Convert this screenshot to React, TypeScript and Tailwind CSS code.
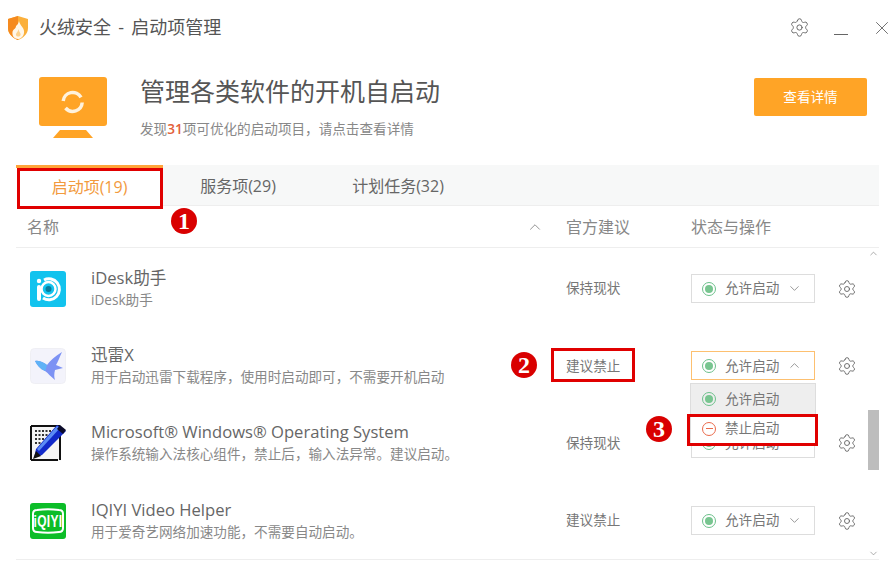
import { ChevronDown, ChevronUp, Settings, X } from "lucide-react"

const rows = [
  { name: "iDesk助手", desc: "iDesk助手", tip: "保持现状", icon: "idesk" },
  { name: "迅雷X", desc: "用于启动迅雷下载程序，使用时启动即可，不需要开机启动", tip: "建议禁止", icon: "xunlei", open: true },
  { name: "Microsoft® Windows® Operating System", desc: "操作系统输入法核心组件，禁止后，输入法异常。建议启动。", tip: "保持现状", icon: "ime" },
  { name: "IQIYI Video Helper", desc: "用于爱奇艺网络加速功能，不需要自动启动。", tip: "建议禁止", icon: "iqiyi" },
]

function ShieldLogo() {
  return (
    <svg width="22" height="26" viewBox="0 0 22 26">
      <path d="M1 4 L11 1 L21 4 V13 C21 19 16 23 11 25 C6 23 1 19 1 13 Z" fill="#fbb03b" />
      <path d="M1 4 L11 1 L11 25 C6 23 1 19 1 13 Z" fill="#f58a1f" />
      <path d="M12 6 C13 11 18 13 17 18 C16.400 22 13 24 11 24 C7 24 5 21 5.500 17 C6 14 9 14 9 11 C10.500 10 11.500 8 12 6 Z" fill="#fff7ea" />
      <path d="M11.500 14 C12 17 14 18 13.500 20 C13 22 9.500 22 9 20 C8.700 18 11 17 11.500 14 Z" fill="#fcd28f" />
    </svg>
  )
}

function MonitorIcon() {
  return (
    <svg width="70" height="62" viewBox="0 0 70 62">
      <rect x="1" y="0" width="68" height="49" rx="3" fill="#ffa426" />
      <path d="M15 61 L22 53 H48 L55 61 Z" fill="#ffa426" />
      <path d="M25.200 24 A9.500 9.500 0 0 1 43 20.400" fill="none" stroke="#fff2dc" strokeWidth="3.500" />
      <path d="M44.200 25.500 A9.500 9.500 0 0 1 27.500 31" fill="none" stroke="#fff2dc" strokeWidth="3.500" />
    </svg>
  )
}

function AppIcon({ kind }: { kind: string }) {
  if (kind === "idesk") {
    return (
      <svg width="36" height="36" viewBox="0 0 36 36">
        <rect width="36" height="36" rx="3" fill="#12c3ee" />
        <path d="M14 9 A10.500 10.500 0 1 1 13 27" fill="none" stroke="#fff" strokeWidth="3" />
        <rect x="7" y="14" width="4" height="16" rx="2" fill="#fff" />
        <circle cx="9" cy="10" r="2.200" fill="#fff" />
        <circle cx="18.500" cy="18" r="7" fill="none" stroke="#fff" strokeWidth="2.500" />
        <circle cx="18.500" cy="18" r="3" fill="#0b7c9c" />
      </svg>
    )
  }
  if (kind === "xunlei") {
    return (
      <svg width="36" height="36" viewBox="0 0 36 36">
        <rect x="0.500" y="0.500" width="35" height="35" rx="4" fill="#f3f3fb" stroke="#efeff4" />
        <path d="M5 13 C10 12 14 15 17 17 C20 13 25 8 32 4 C29 10 28 14 26 17 L33 20 L25 22 C24 26 24 29 25 32 C21 29 18 25 15 23 C10 21 7 17 5 13 Z" fill="#7c92f4" />
        <path d="M5 13 C10 12 14 15 17 17 C16 20 16 22 15 23 C10 21 7 17 5 13 Z" fill="#5fb2f6" />
      </svg>
    )
  }
  if (kind === "ime") {
    return (
      <svg width="36" height="36" viewBox="0 0 36 36">
        <path d="M0.500 0.500 H31 V35.500 H0.500 Z" fill="#f4f4f4" />
        <path d="M1 1 H30 M1 1 V35 M1 35 H28" fill="none" stroke="#111" strokeWidth="2" />
        <path d="M5 6 H24 M5 10 H20 M5 14 H16 M5 18 H12" fill="none" stroke="#333" strokeWidth="2" strokeDasharray="2 1.500" />
        <path d="M30 11 V35" fill="none" stroke="#111" strokeWidth="2" />
        <path d="M27 0 L36 6 L12 30 L4 33 L6 24 Z" fill="#1129c9" />
        <path d="M27 1 L30 3 L9 26 L7 24 Z" fill="#5b8cf5" />
        <path d="M30 0 L36 5 L33 9 L27 4 Z" fill="#0b0b2a" />
        <path d="M6 26 L3 34 L11 31 Z" fill="#111" />
      </svg>
    )
  }
  return (
    <svg width="36" height="36" viewBox="0 0 36 36">
      <rect width="36" height="36" rx="3" fill="#0cbd28" />
      <path d="M3 11 C3 8 5 7 7 7 C14 6 22 6 29 7 C31 7 33 8 33 11 V25 C33 28 31 29 29 29 C22 30 14 30 7 29 C5 29 3 28 3 25 Z" fill="none" stroke="#fff" strokeWidth="2" />
      <text transform="translate(18 23.500) scale(1 1.400)" textAnchor="middle" fontSize="12" fontWeight="700" fill="#fff" fontFamily="Liberation Sans, sans-serif" letterSpacing="0.300">iQIYI</text>
    </svg>
  )
}

function AllowDot() {
  return (
    <span className="flex h-[14px] w-[14px] shrink-0 items-center justify-center rounded-full border border-[#6cc08b]">
      <span className="h-2 w-2 rounded-full bg-[#78c590]" />
    </span>
  )
}

function Badge({ n, className }: { n: number; className: string }) {
  return (
    <span
      className={`absolute flex h-[26px] w-[26px] items-center justify-center rounded-full bg-[#d90000] pb-px font-['Liberation_Serif',serif] text-[24px] font-bold text-white ${className}`}
    >
      {n}
    </span>
  )
}

export default function App() {
  return (
    <div className="relative h-[563px] w-[896px] overflow-hidden bg-white font-['Open_Sans','Noto_Sans_CJK_SC',sans-serif] text-[#666]">
      {/* title bar */}
      <div className="flex h-[55px] items-center pl-[7px] pr-[3px]">
        <ShieldLogo />
        <span className="ml-[10px] text-[18px] text-[#555] [word-spacing:2.500px]">火绒安全 - 启动项管理</span>
        <div className="ml-auto flex items-center">
          <Settings size={21} strokeWidth={1.1} className="mr-[24px] text-[#666]" />
          <span className="mr-[23px] mt-[13px] h-px w-[14px] bg-[#666]" />
          <X size={22} strokeWidth={1} className="text-[#666]" />
        </div>
      </div>

      {/* banner */}
      <div className="flex h-[110px] items-start pl-[38px] pr-[29px] pt-[22px]">
        <MonitorIcon />
        <div className="ml-[32px] flex flex-col">
          <h1 className="-mt-px text-[25px] leading-[30px] text-[#555]">管理各类软件的开机自启动</h1>
          <p className="mt-[14px] text-[13.600px] leading-[18px] text-[#888]">
            发现<span className="font-semibold text-[#e2603a]">31</span>项可优化的启动项目，请点击查看详情
          </p>
        </div>
        <button className="ml-auto mt-px h-[38px] w-[113px] rounded-[2px] bg-[#ffa426] text-[13.600px] text-white">查看详情</button>
      </div>

      {/* tabs */}
      <div className="mx-4 flex h-[41px] w-[863px] items-center border-b border-[#eee] bg-[#f7f8f8] pt-px text-base text-[#666]">
        <div className="-mt-px flex h-[41px] w-[147px] items-center justify-center border-t-[3px] border-[#ffa43a] bg-white text-[#f29a3d]">启动项(19)</div>
        <div className="w-[150px] text-center">服务项(29)</div>
        <div className="ml-[10px] w-[150px] text-center">计划任务(32)</div>
      </div>

      {/* table header */}
      <div className="mx-4 flex h-[42px] w-[863px] items-center border-b border-[#eee] text-base text-[#888]">
        <span className="ml-[11px]">名称</span>
        <ChevronUp size={18} strokeWidth={1.2} className="ml-auto text-[#888]" />
        <span className="ml-[22px] w-[125px]">官方建议</span>
        <span className="w-[188px]">状态与操作</span>
      </div>

      {/* rows */}
      <div className="relative mx-4 h-[312px] w-[863px] border-b border-[#eee] pt-[2px]">
        {rows.map((row) => (
          <div key={row.name} className="relative flex h-[77.300px] items-center">
            <div className="ml-[14px] w-[36px] shrink-0">
              <AppIcon kind={row.icon} />
            </div>
            <div className="ml-[25px] flex flex-col">
              <span className="text-[16.600px] leading-[22px] text-[#666]">{row.name}</span>
              <span className="text-[13.600px] leading-[22px] text-[#888]">{row.desc}</span>
            </div>
            <span className="absolute left-[550px] text-[13.600px] text-[#777]">{row.tip}</span>
            <div
              className={`absolute left-[675px] flex h-[29px] w-[124px] items-center border pl-[10px] text-[13.600px] text-[#777] ${
                row.open ? "border-[#fdc070]" : "border-[#ddd]"
              }`}
            >
              <AllowDot />
              <span className="ml-[9px] whitespace-nowrap">允许启动</span>
              {row.open ? (
                <ChevronUp size={15} strokeWidth={1.2} className="ml-[8px]" />
              ) : (
                <ChevronDown size={15} strokeWidth={1.2} className="ml-[8px]" />
              )}
            </div>
            <Settings size={20} strokeWidth={1.1} className="absolute left-[821px] text-[#666]" />
          </div>
        ))}

        {/* scrollbar */}
        <div className="absolute right-0 top-0 flex h-full w-[11px] flex-col items-center justify-between">
          <ChevronUp size={11} strokeWidth={1.5} className="text-[#888]" />
          <ChevronDown size={11} strokeWidth={1.5} className="text-[#888]" />
        </div>
        <div className="absolute right-0 top-[162px] h-[60px] w-[11px] bg-[#bdbdbd]" />

        {/* open dropdown */}
        <div className="absolute left-[674px] top-[135px] flex h-[61px] w-[126px] flex-col border border-[#ddd] bg-white text-[13.600px] text-[#777]">
          <div className="flex h-[30px] items-center bg-[#eeeeee] pl-[11px]">
            <AllowDot />
            <span className="ml-[9px]">允许启动</span>
          </div>
          <div className="flex h-[29px] items-center pl-[11px]">
            <span className="flex h-[14px] w-[14px] shrink-0 items-center justify-center rounded-full border border-[#ea6b4c]">
              <span className="h-px w-[7px] bg-[#ea6b4c]" />
            </span>
            <span className="ml-[9px]">禁止启动</span>
          </div>
        </div>
      </div>

      {/* annotation boxes */}
      <div className="absolute left-[17px] top-[168px] h-[41px] w-[146px] border-[3px] border-[#e00000]" />
      <div className="absolute left-[551px] top-[348px] h-[34px] w-[84px] border-[3px] border-[#e00000]" />
      <div className="absolute left-[687px] top-[414px] h-[32px] w-[131px] border-[3px] border-[#e00000]" />
      <Badge n={1} className="left-[171px] top-[208px]" />
      <Badge n={2} className="left-[511px] top-[352px]" />
      <Badge n={3} className="left-[646px] top-[416px]" />
    </div>
  )
}
